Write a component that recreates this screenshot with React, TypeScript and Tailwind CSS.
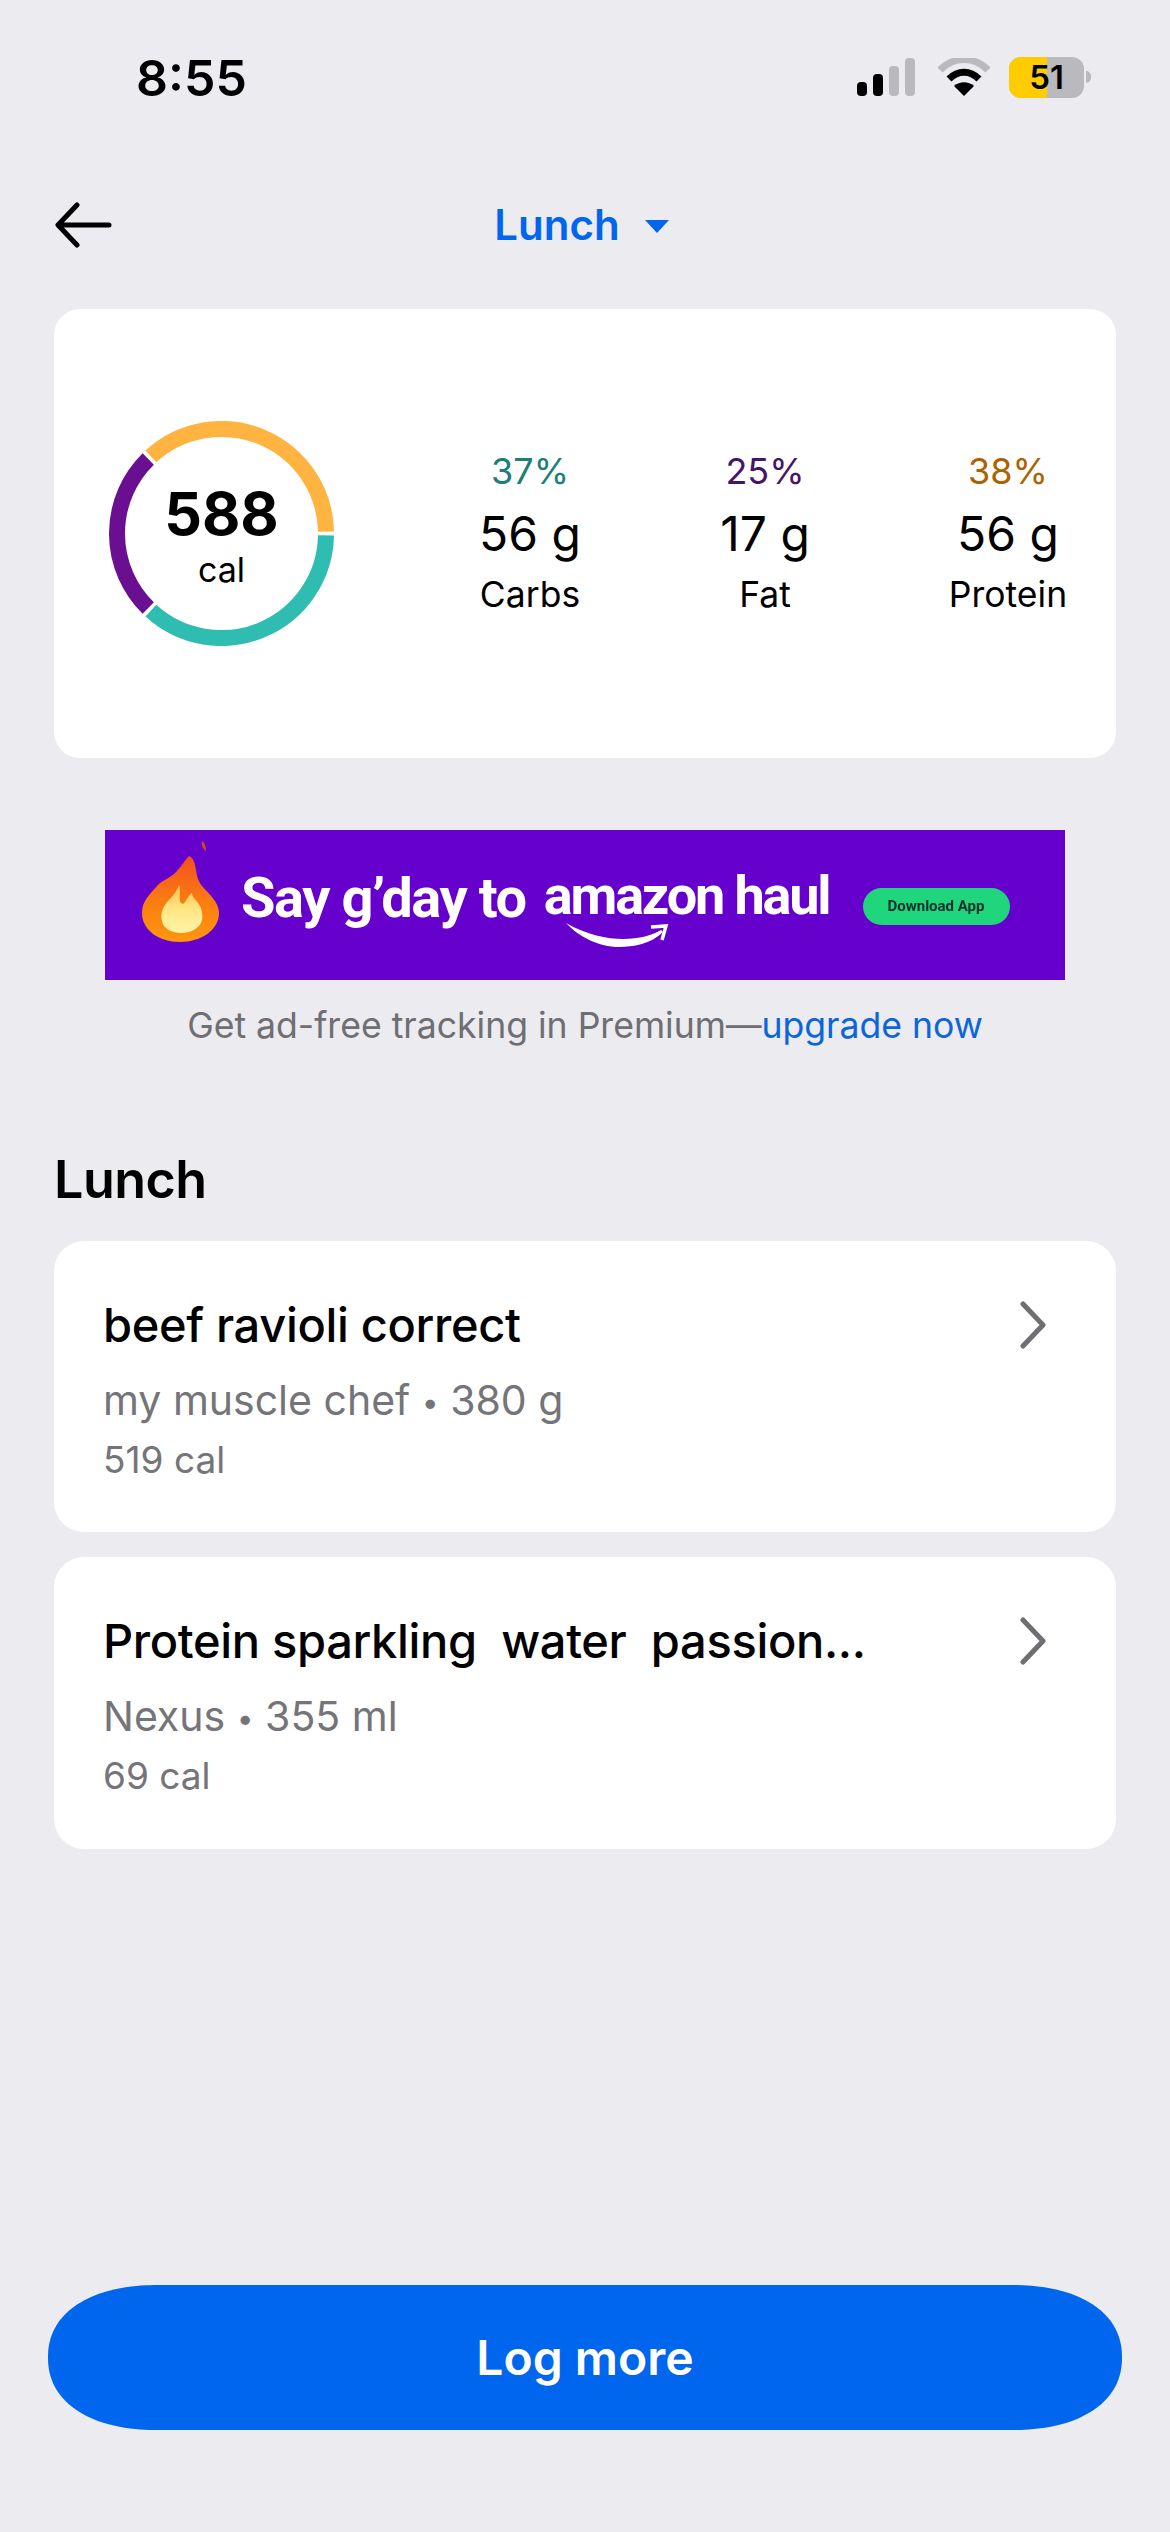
import React from "react";

const font = { fontFamily: "Inter, 'Noto Sans', sans-serif" };

function arc(r: number, a0: number, a1: number) {
  const c = 112.5;
  const p = (a: number) => {
    const t = (a * Math.PI) / 180;
    return `${(c + r * Math.cos(t)).toFixed(2)} ${(c + r * Math.sin(t)).toFixed(2)}`;
  };
  return `M${p(a0)}A${r} ${r} 0 ${a1 - a0 > 180 ? 1 : 0} 1 ${p(a1)}`;
}

function Ring() {
  return (
    <div className="relative w-[225px] h-[225px] shrink-0 flex flex-col items-center">
      <svg className="absolute inset-0" width="225" height="225" viewBox="0 0 225 225" fill="none">
        <path d={arc(104.5, 1, 132.5)} stroke="#2EBDB0" strokeWidth="16" />
        <path d={arc(104.5, 134.5, 225.5)} stroke="#6A0F91" strokeWidth="16" />
        <path d={arc(104.5, 227.5, 359)} stroke="#FFB341" strokeWidth="16" />
      </svg>
      <div className="mt-[56px] text-[59px] leading-[74px] font-bold text-black">588</div>
      <div className="mt-[-1px] text-[34px] leading-[40px] text-black">cal</div>
    </div>
  );
}

function Macro({ pct, val, label, color, cls }: { pct: string; val: string; label: string; color: string; cls: string }) {
  return (
    <div className={`w-[200px] flex flex-col items-center shrink-0 ${cls}`}>
      <div className={`text-[36px] leading-[40px] ${color}`}>{pct}</div>
      <div className="mt-[15px] text-[48px] leading-[56px] text-black">{val}</div>
      <div className="mt-[12px] text-[35.5px] leading-[42px] text-black">{label}</div>
    </div>
  );
}

function FoodCard({ title, sub, cal, h }: { title: string; sub: React.ReactNode; cal: string; h: string }) {
  return (
    <div className={`bg-white rounded-[30px] pl-[49px] pr-[69px] pt-[54px] flex justify-between ${h}`}>
      <div className="flex flex-col">
        <div className="text-[47px] leading-[60px] font-medium tracking-[-0.33px] text-black whitespace-pre">{title}</div>
        <div className="mt-[19px] text-[41px] leading-[52px] text-[#747479]">{sub}</div>
        <div className="mt-[10px] text-[37px] leading-[44px] text-[#747479]">{cal}</div>
      </div>
      <svg className="mt-[6px]" width="28" height="48" viewBox="0 0 28 48" fill="none">
        <path d="M4 3l20 21L4 45" stroke="#6E6E73" strokeWidth="5" strokeLinecap="round" strokeLinejoin="round" />
      </svg>
    </div>
  );
}

function Ad() {
  return (
    <div className="mx-[105px] mt-[72px] h-[150px] bg-[#6600CC] flex items-center pl-[37px] overflow-hidden shrink-0" style={{ fontFamily: "Roboto, sans-serif" }}>
      <svg className="shrink-0 -mt-[28px] blur-[0.7px]" width="77" height="102" viewBox="0 0 77 102" fill="none">
        <defs>
          <linearGradient id="fl" x1="0" y1="0" x2="0" y2="1">
            <stop offset="0" stopColor="#F2501F" />
            <stop offset="0.5" stopColor="#FA7A12" />
            <stop offset="1" stopColor="#FF980E" />
          </linearGradient>
          <linearGradient id="fi" x1="0" y1="0" x2="0" y2="1">
            <stop offset="0" stopColor="#FFC24A" />
            <stop offset="0.55" stopColor="#FFE888" />
            <stop offset="1" stopColor="#FFF3A8" />
          </linearGradient>
        </defs>
        <path d="M60 1c3 2 4 6 4 10-3-2-5-6-4-10z" fill="#D8481F" />
        <path d="M47 16c5 2 6 8 7 14 1 6 2 11 6 16 7 8 17 16 17 27 0 17-18 29-39 29S0 90 0 73c0-12 8-19 15-27 5-6 14-8 20-15 4-4 7-10 12-15z" fill="url(#fl)" />
        <path d="M37 45c2 3 0 10 1 16 1 3 3 4 5 1 2-3 4-7 7-9 0 5 5 7 8 13 3 6 3 13 1 17-3 6-11 10-20 10-10 0-18-5-19-12-2-8 1-14 6-20 5-5 9-10 11-16z" fill="url(#fi)" />
      </svg>
      <div className="ml-[22px] text-white font-bold text-[56px] leading-[64px] tracking-[-0.025em] whitespace-nowrap blur-[0.6px] -mt-[14px]">Say g’day to</div>
      <div className="relative ml-[18px] text-white font-bold text-[54px] leading-[64px] tracking-[-0.04em] whitespace-nowrap blur-[0.6px] -mt-[18px]">
        amazon haul
        <svg className="absolute left-[21px] top-[58px]" width="104" height="26" viewBox="0 0 104 26" fill="none">
          <path d="M1 1C22 13 42 17 58 17 74 17 88 13 96 8l2 2C86 22 68 25 54 25 34 25 14 15 1 1z" fill="white" />
          <path d="M86 5l15-1-4 14" stroke="white" strokeWidth="3.5" />
        </svg>
      </div>
      <div className="ml-[33px] mt-[3px] w-[147px] h-[37px] rounded-full bg-[#1FD67D] flex items-center justify-center text-[15px] font-bold text-[#0A2F2A] whitespace-nowrap blur-[0.5px] shrink-0">Download App</div>
    </div>
  );
}

export default function App() {
  return (
    <div className="w-[1170px] h-[2532px] bg-[#EBEBF0] flex flex-col overflow-hidden" style={font}>
      {/* status bar */}
      <div className="mt-[30px] h-[94px] pl-[136px] pr-[79px] flex items-center justify-between">
        <div className="text-[50px] leading-[60px] font-semibold text-black mt-[1px]">8:55</div>
        <div className="flex items-center">
          <svg width="58" height="38" viewBox="0 0 58 38">
            <rect x="0" y="24" width="10" height="14" rx="4" fill="#000" />
            <rect x="16" y="16" width="10" height="22" rx="4" fill="#000" />
            <rect x="32" y="8" width="10" height="30" rx="4" fill="#B9B9BE" />
            <rect x="48" y="0" width="10" height="38" rx="4" fill="#B9B9BE" />
          </svg>
          <svg className="ml-[23px]" width="52" height="38" viewBox="0 0 52 38" fill="none">
            <path d="M2 12C16-2 36-2 50 12" stroke="#B9B9BE" strokeWidth="7" />
            <path d="M11 21c9-9 21-9 30 0" stroke="#000" strokeWidth="7" />
            <path d="M26 38l-10-10c6-5 14-5 20 0z" fill="#000" />
          </svg>
          <div className="relative ml-[19px] w-[75px] h-[41px] rounded-[12px] bg-[#B9B9BE] overflow-hidden flex items-center justify-center">
            <div className="absolute left-0 top-0 bottom-0 w-[38px] bg-[#FFCC00]" />
            <span className="relative text-[33px] leading-[41px] font-semibold text-black">51</span>
          </div>
          <div className="ml-[2px] w-[5px] h-[12px] rounded-r-full bg-[#B9B9BE]" />
        </div>
      </div>

      {/* nav */}
      <div className="relative mt-[51px] h-[100px] flex items-center justify-center">
        <svg className="absolute left-[54px] top-[27px]" width="60" height="46" viewBox="0 0 60 46" fill="none">
          <path d="M23 3L4 23l19 20M5 23h50" stroke="#000" strokeWidth="5" strokeLinecap="round" strokeLinejoin="round" />
        </svg>
        <div className="flex items-center mr-[6px] text-[#0066EE] text-[42px] leading-[50px] font-semibold">
          Lunch
          <svg className="ml-[24px] mt-[1px]" width="26" height="14" viewBox="0 0 26 14">
            <path d="M1 1h24L13 14z" fill="#0066EE" />
          </svg>
        </div>
      </div>

      {/* summary */}
      <div className="mx-[54px] mt-[34px] h-[449px] bg-white rounded-[26px] flex items-center pl-[55px] shrink-0">
        <Ring />
        <div className="flex items-start">
          <Macro cls="ml-[96px]" pct="37%" val="56 g" label="Carbs" color="text-[#1A7F78]" />
          <Macro cls="ml-[35px]" pct="25%" val="17 g" label="Fat" color="text-[#45156B]" />
          <Macro cls="ml-[43px]" pct="38%" val="56 g" label="Protein" color="text-[#AD6200]" />
        </div>
      </div>

      <Ad />

      <div className="mt-[24px] text-center text-[35.6px] leading-[44px] text-[#6E6E73]">
        Get ad-free tracking in Premium—<span className="text-[#0A66D9]">upgrade now</span>
      </div>

      <div className="mt-[100px] ml-[54px] text-[52px] leading-[64px] font-semibold tracking-[-0.5px] text-black">Lunch</div>

      <div className="mx-[54px] mt-[29px] flex flex-col gap-[25px]">
        <FoodCard
          h="h-[291px]"
          title="beef ravioli correct"
          sub={<>my muscle chef <span className="text-[30px] align-[2px]">•</span> 380 g</>}
          cal="519 cal"
        />
        <FoodCard
          h="h-[292px]"
          title="Protein sparkling  water  passion..."
          sub={<>Nexus <span className="text-[30px] align-[2px]">•</span> 355 ml</>}
          cal="69 cal"
        />
      </div>

      <div className="mt-auto mb-[102px] mx-[48px] h-[145px] bg-[#0066EE] rounded-[110px/72px] [corner-shape:superellipse(1.15)] flex items-center justify-center text-white text-[48px] leading-[56px] font-semibold">
        Log more
      </div>
    </div>
  );
}
